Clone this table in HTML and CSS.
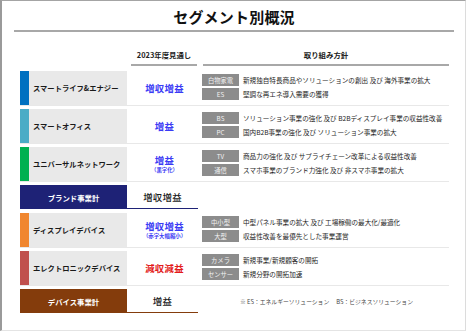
FILE: index.html
```html
<!DOCTYPE html>
<html lang="ja">
<head>
<meta charset="utf-8">
<title>セグメント別概況</title>
<link rel="stylesheet" href="styles.css">
</head>
<body>
<div class="page">
  <div class="title-bar"><h1 class="title">セグメント別概況</h1></div>
  <div class="table">
    <div class="head">
      <div></div>
      <div class="hcell hmid">2023年度見通し</div>
      <div class="hcell hright">取り組み方針</div>
    </div>

    <div class="row">
      <div class="bar c-life"></div>
      <div class="label">スマートライフ&amp;エナジー</div>
      <div class="outlook"><span class="val blue">増収増益</span></div>
      <div class="policies">
        <div class="pol"><span class="tag">白物家電</span><span class="desc">新規独自特長商品やソリューションの創出 及び 海外事業の拡大</span></div>
        <div class="pol"><span class="tag">ES</span><span class="desc">堅調な再エネ導入需要の獲得</span></div>
      </div>
    </div>

    <div class="row">
      <div class="bar c-office"></div>
      <div class="label">スマートオフィス</div>
      <div class="outlook"><span class="val blue">増益</span></div>
      <div class="policies">
        <div class="pol"><span class="tag">BS</span><span class="desc">ソリューション事業の強化 及び B2Bディスプレイ事業の収益性改善</span></div>
        <div class="pol"><span class="tag">PC</span><span class="desc">国内B2B事業の強化 及び ソリューション事業の拡大</span></div>
      </div>
    </div>

    <div class="row">
      <div class="bar c-net"></div>
      <div class="label">ユニバーサルネットワーク</div>
      <div class="outlook"><span class="val blue">増益</span><span class="sub blue">（黒字化）</span></div>
      <div class="policies">
        <div class="pol"><span class="tag">TV</span><span class="desc">商品力の強化 及び サプライチェーン改革による収益性改善</span></div>
        <div class="pol"><span class="tag">通信</span><span class="desc">スマホ事業のブランド力強化 及び 非スマホ事業の拡大</span></div>
      </div>
    </div>

    <div class="total">
      <div class="tbox brand">ブランド事業計</div>
      <div class="tval brand-line">増収増益</div>
      <div></div>
    </div>

    <div class="row">
      <div class="bar c-disp"></div>
      <div class="label">ディスプレイデバイス</div>
      <div class="outlook"><span class="val blue">増収増益</span><span class="sub blue">（赤字大幅縮小）</span></div>
      <div class="policies">
        <div class="pol"><span class="tag">中小型</span><span class="desc">中型パネル事業の拡大 及び 工場稼働の最大化/最適化</span></div>
        <div class="pol"><span class="tag">大型</span><span class="desc">収益性改善を最優先とした事業運営</span></div>
      </div>
    </div>

    <div class="row">
      <div class="bar c-elec"></div>
      <div class="label">エレクトロニックデバイス</div>
      <div class="outlook"><span class="val red">減収減益</span></div>
      <div class="policies">
        <div class="pol"><span class="tag">カメラ</span><span class="desc">新規事業/新規顧客の開拓</span></div>
        <div class="pol"><span class="tag">センサー</span><span class="desc">新規分野の開拓加速</span></div>
      </div>
    </div>

    <div class="total">
      <div class="tbox device">デバイス事業計</div>
      <div class="tval device-line">増益</div>
      <div class="note">※ ES：エネルギーソリューション　 BS：ビジネスソリューション</div>
    </div>
  </div>
</div>
</body>
</html>
```
FILE: styles.css
```css
* { box-sizing: border-box; }
html, body { margin: 0; padding: 0; background: #fff; }
body {
  font-family: "Noto Sans CJK JP", "Noto Sans", "Liberation Sans", sans-serif;
  color: #222;
}
.page {
  width: 466px;
  height: 331px;
  border-top: 1px solid #a4a4a4;
  border-left: 2px solid #9a9a9a;
  border-right: 1px solid #dcdcdc;
  border-bottom: 1px solid #e4e4e4;
}
.title-bar {
  margin-left: 12px;
  width: 440px;
  height: 31px;
  border-bottom: 2px solid #a8a8a8;
  display: flex;
  align-items: center;
  justify-content: center;
}
.title {
  margin: 0;
  font-size: 15px;
  font-weight: 700;
  color: #111;
  line-height: 1;
  padding-top: 2px;
  letter-spacing: 0.2px;
}
.table {
  margin-left: 18px;
  width: 429px;
}
.head {
  display: grid;
  grid-template-columns: 107px 75px 247px;
  margin-top: 12px;
  margin-bottom: 5px;
}
.hcell {
  height: 22px;
  border-bottom: 2px solid #a8a8a8;
  display: flex;
  align-items: center;
  justify-content: center;
  font-size: 7.4px;
  font-weight: 700;
  color: #222;
}
.hmid { margin: 0 5px 0 4px; }
.hright { margin-left: 1px; }

.row {
  display: grid;
  grid-template-columns: 9px 98px 75px 247px;
  height: 35px;
  border-bottom: 1px solid #e8e8e8;
  margin-bottom: 3px;
}
.bar { height: 34px; }
.c-life { background: #0070c0; }
.c-office { background: #4bacc6; }
.c-net { background: #00b050; }
.c-disp { background: #f0862f; }
.c-elec { background: #c0504d; }
.label {
  height: 34px;
  background: #e9e9e9;
  display: flex;
  align-items: center;
  padding-left: 4px;
  font-size: 7.3px;
  font-weight: 700;
  color: #1a1a1a;
  white-space: nowrap;
}
.outlook {
  height: 34px;
  display: flex;
  flex-direction: column;
  align-items: center;
  justify-content: center;
  gap: 1px;
}
.val {
  display: block;
  font-size: 9.4px;
  font-weight: 700;
  line-height: 11px;
  letter-spacing: 0.3px;
}
.sub {
  display: block;
  font-size: 5.4px;
  font-weight: 700;
  line-height: 7px;
}
.blue { color: #3b3bf5; }
.red { color: #e31b1b; }
.policies {
  padding-top: 3px;
  display: flex;
  flex-direction: column;
  gap: 2px;
}
.pol {
  display: flex;
  align-items: center;
  height: 12px;
}
.tag {
  width: 37px;
  height: 12px;
  background: #8c8c8c;
  color: #f2f2f2;
  font-size: 6.3px;
  display: flex;
  align-items: center;
  justify-content: center;
  flex-shrink: 0;
}
.desc {
  margin-left: 4px;
  font-size: 6.6px;
  color: #1e1e1e;
  white-space: nowrap;
}

.total {
  display: grid;
  grid-template-columns: 107px 71px 1fr;
  height: 24px;
  margin-bottom: 4px;
}
.tbox {
  display: flex;
  align-items: center;
  justify-content: center;
  color: #fff;
  font-size: 7.4px;
  font-weight: 700;
}
.brand { background: #1e2276; }
.device { background: #843c0c; }
.tval {
  display: flex;
  align-items: center;
  justify-content: center;
  font-size: 9.4px;
  font-weight: 500;
  color: #1a1a1a;
  letter-spacing: 0.3px;
}
.brand-line { border-bottom: 1px solid #1e2276; }
.device-line { border-bottom: 1px solid #843c0c; }
.note {
  display: flex;
  align-items: center;
  padding-left: 42px;
  font-size: 5.8px;
  color: #444;
  white-space: nowrap;
}
```
